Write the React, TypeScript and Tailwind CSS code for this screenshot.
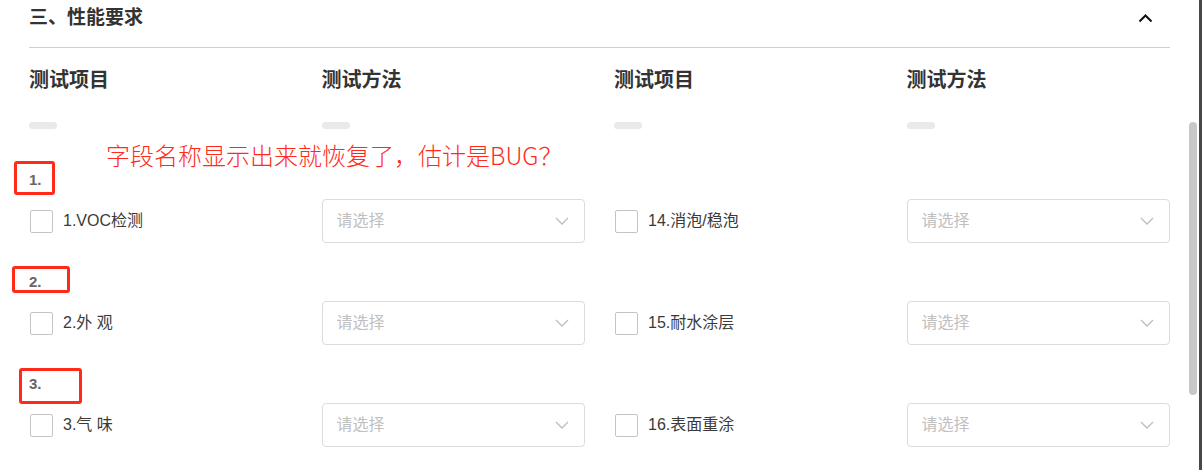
import React from "react";

const rows = [
  { n: "1.", a: "1.VOC检测", b: "14.消泡/稳泡" },
  { n: "2.", a: "2.外 观", b: "15.耐水涂层" },
  { n: "3.", a: "3.气 味", b: "16.表面重涂" },
];

function Check({ label }: { label: string }) {
  return (
    <div className="flex h-[44px] items-center">
      <span className="ml-[1px] box-border h-[23px] w-[23px] rounded-[2px] border border-[#c4c4c4] bg-white" />
      <span className="ml-[10px] text-[16px] text-[#3a3a3a]">{label}</span>
    </div>
  );
}

function Select() {
  return (
    <div className="box-border flex h-[44px] items-center justify-between rounded-[4px] border border-[#dcdcdc] bg-white pl-[14px] pr-[15px]">
      <span className="text-[16px] text-[#c0c0c0]">请选择</span>
      <svg width="14" height="8" viewBox="0 0 14 8" fill="none">
        <polyline points="1,1 7,7 13,1" stroke="#bdbdbd" strokeWidth="1.3" />
      </svg>
    </div>
  );
}

export default function App() {
  return (
    <div
      className="relative flex h-[470px] w-[1202px] overflow-hidden bg-white"
      style={{ fontFamily: '"Liberation Sans", "Noto Sans CJK SC", sans-serif' }}
    >
      <div className="w-[1186px] pl-[29px] pr-[16px]">
        <div className="flex h-[47px] items-start justify-between pt-[6px]">
          <span className="text-[19px] font-bold leading-[24px] text-[#333]">三、性能要求</span>
          <svg className="mr-[17px] mt-[7px]" width="15" height="10" viewBox="0 0 15 10" fill="none">
            <polyline points="1.5,8.5 7.5,2.5 13.5,8.5" stroke="#111" strokeWidth="2" />
          </svg>
        </div>
        <div className="h-px bg-[#cfcfcf]" />
        <div className="mt-[18px] grid grid-cols-4 gap-x-[29px]">
          {["测试项目", "测试方法", "测试项目", "测试方法"].map((t, i) => (
            <div key={i} className="flex flex-col">
              <span className="text-[20px] font-bold leading-[28px] text-[#333]">{t}</span>
              <span className="mt-[28px] h-[7px] w-[28px] rounded-full bg-[#e9e9e9]" />
            </div>
          ))}
        </div>
        <div className="mt-[41px] flex flex-col">
          {rows.map((r) => (
            <div key={r.n} className="mb-[29px] flex flex-col">
              <span className="h-[20px] text-[15px] font-bold leading-[20px] text-[#666]">{r.n}</span>
              <div className="mt-[9px] grid grid-cols-4 gap-x-[29px]">
                <Check label={r.a} />
                <Select />
                <Check label={r.b} />
                <Select />
              </div>
            </div>
          ))}
        </div>
      </div>
      <div className="w-[13px] pl-[3px]">
        <div className="mt-[122px] h-[273px] w-[8px] rounded-full bg-[#c8c8c8]" />
      </div>
      <div className="w-[3px] bg-[#484848]" />

      {/* annotations */}
      <div
        className="absolute left-[106px] top-[139px] text-[24px] font-light leading-[32px] text-[#ff2a1a]"
        style={{ fontFamily: '"Noto Sans CJK SC", sans-serif' }}
      >
        字段名称显示出来就恢复了，估计是BUG？
      </div>
      <div className="absolute left-[14px] top-[161px] h-[34px] w-[41px] rounded-[3px] border-[3px] border-[#ff2a1a]" />
      <div className="absolute left-[12px] top-[266px] h-[27px] w-[58px] rounded-[3px] border-[3px] border-[#ff2a1a]" />
      <div className="absolute left-[19px] top-[368px] h-[36px] w-[63px] rounded-[3px] border-[3px] border-[#ff2a1a]" />
    </div>
  );
}
